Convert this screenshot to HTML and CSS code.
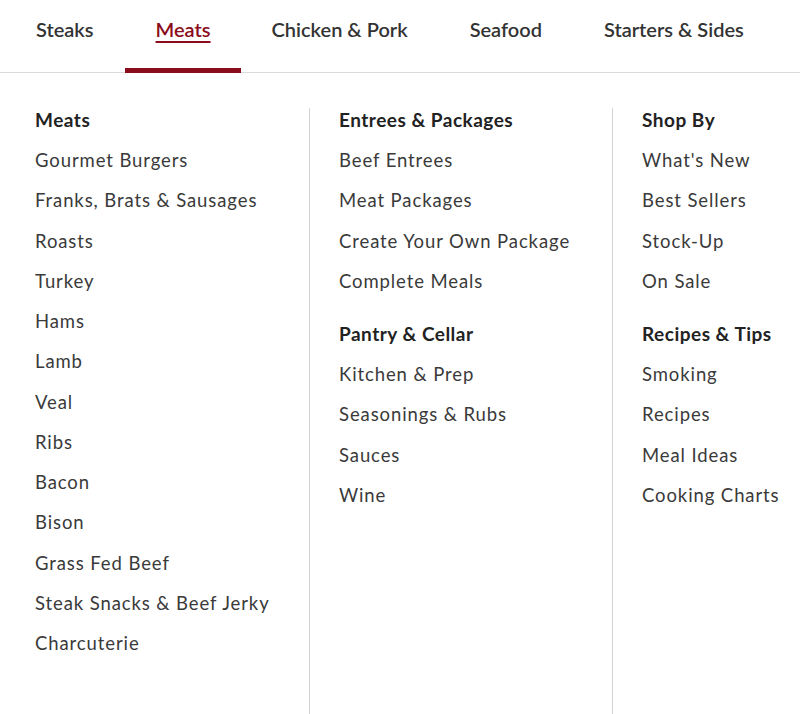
FILE: index.html
```html
<!DOCTYPE html>
<html lang="en">
<head>
<meta charset="utf-8">
<title>Meats menu</title>
<link rel="stylesheet" href="styles.css">
</head>
<body>
<nav class="tabs">
  <a class="tab" href="#">Steaks</a>
  <a class="tab active" href="#">Meats</a>
  <a class="tab" href="#">Chicken &amp; Pork</a>
  <a class="tab" href="#">Seafood</a>
  <a class="tab" href="#">Starters &amp; Sides</a>
</nav>
<div class="menu">
  <div class="col">
    <h3 class="head">Meats</h3>
    <ul class="list">
      <li>Gourmet Burgers</li>
      <li>Franks, Brats &amp; Sausages</li>
      <li>Roasts</li>
      <li>Turkey</li>
      <li>Hams</li>
      <li>Lamb</li>
      <li>Veal</li>
      <li>Ribs</li>
      <li>Bacon</li>
      <li>Bison</li>
      <li>Grass Fed Beef</li>
      <li>Steak Snacks &amp; Beef Jerky</li>
      <li>Charcuterie</li>
    </ul>
  </div>
  <div class="col divided">
    <h3 class="head">Entrees &amp; Packages</h3>
    <ul class="list">
      <li>Beef Entrees</li>
      <li>Meat Packages</li>
      <li>Create Your Own Package</li>
      <li>Complete Meals</li>
    </ul>
    <h3 class="head next">Pantry &amp; Cellar</h3>
    <ul class="list">
      <li>Kitchen &amp; Prep</li>
      <li>Seasonings &amp; Rubs</li>
      <li>Sauces</li>
      <li>Wine</li>
    </ul>
  </div>
  <div class="col divided">
    <h3 class="head">Shop By</h3>
    <ul class="list">
      <li>What's New</li>
      <li>Best Sellers</li>
      <li>Stock-Up</li>
      <li>On Sale</li>
    </ul>
    <h3 class="head next">Recipes &amp; Tips</h3>
    <ul class="list">
      <li>Smoking</li>
      <li>Recipes</li>
      <li>Meal Ideas</li>
      <li>Cooking Charts</li>
    </ul>
  </div>
</div>
</body>
</html>
```
FILE: styles.css
```css
html, body {
  margin: 0;
  padding: 0;
  background: #fff;
  height: 100%;
}
body {
  font-family: Lato, "Open Sans", sans-serif;
  color: #333;
  overflow: hidden;
}
.tabs {
  display: flex;
  height: 72px;
  padding-left: 5px;
  border-bottom: 1px solid #dadada;
}
.tab {
  display: flex;
  align-items: center;
  padding: 0 31px 11px;
  font-size: 20px;
  font-weight: 600;
  color: #333;
  text-decoration: none;
  box-sizing: border-box;
  height: 73px;
  margin-bottom: -1px;
  border-bottom: 5px solid transparent;
}
.tab.active {
  padding-left: 31px;
  padding-right: 30px;
  color: #8b0c1a;
  text-decoration: underline;
  text-decoration-thickness: 1.5px;
  text-underline-offset: 4px;
  border-bottom-color: #8b0c1a;
}
.menu {
  display: grid;
  grid-template-columns: 305px 303px 1fr;
  margin: 35px 0 0 4px;
  height: 606px;
}
.col {
  padding-left: 31px;
}
.col.divided {
  border-left: 1px solid #d2d2d2;
  padding-left: 29px;
}
.head {
  margin: 0 0 8px;
  font-size: 19px;
  line-height: 24px;
  font-weight: 700;
  letter-spacing: 0.5px;
  color: #222;
}
.head.next {
  margin-top: 21px;
}
.list {
  list-style: none;
  margin: 0;
  padding: 0;
}
.list li {
  font-size: 18.5px;
  line-height: 40.25px;
  letter-spacing: 0.9px;
  color: #3a3a3a;
}
```
